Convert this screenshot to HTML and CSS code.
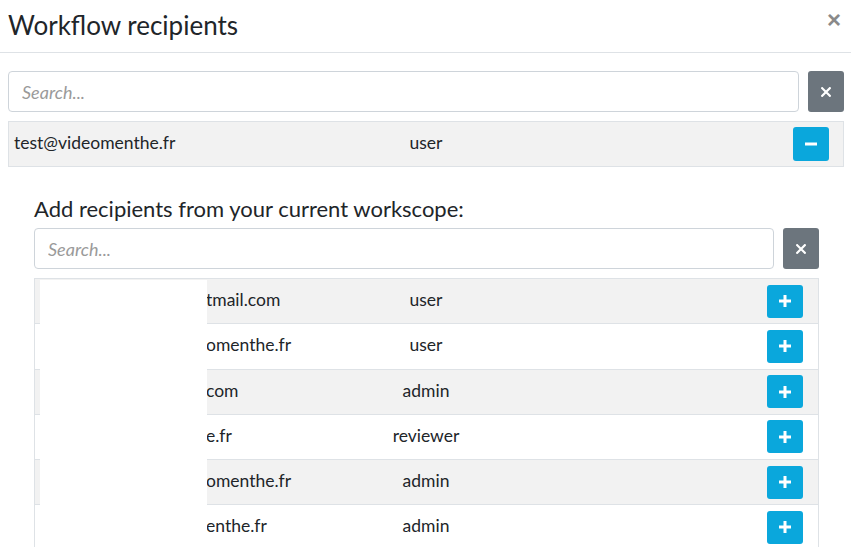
FILE: index.html
```html
<!DOCTYPE html>
<html lang="en">
<head>
<meta charset="utf-8">
<title>Workflow recipients</title>
<link rel="stylesheet" href="styles.css">
</head>
<body>
<div class="modal">
  <header class="modal-header">
    <h1 class="modal-title">Workflow recipients</h1>
    <button class="close" type="button">&times;</button>
  </header>
  <div class="modal-body">
    <div class="search-row">
      <input class="search-input" type="text" placeholder="Search...">
      <button class="btn-clear" type="button"><svg width="10" height="10" viewBox="0 0 10 10"><path d="M1.2 1.2 8.8 8.8M8.8 1.2 1.2 8.8" stroke="#fff" stroke-width="2.2" stroke-linecap="square"/></svg></button>
    </div>
    <div class="selected-list">
      <div class="row row-selected">
        <div class="cell-email">test@videomenthe.fr</div>
        <div class="cell-role">user</div>
        <div class="cell-action">
          <button class="btn-blue" type="button"><svg width="12" height="12" viewBox="0 0 12 12"><rect x="0" y="4.5" width="12" height="3" fill="#fff"/></svg></button>
        </div>
      </div>
    </div>

    <section class="add-section">
      <h2 class="add-title">Add recipients from your current workscope:</h2>
      <div class="search-row">
        <input class="search-input" type="text" placeholder="Search...">
        <button class="btn-clear" type="button"><svg width="10" height="10" viewBox="0 0 10 10"><path d="M1.2 1.2 8.8 8.8M8.8 1.2 1.2 8.8" stroke="#fff" stroke-width="2.2" stroke-linecap="square"/></svg></button>
      </div>
      <div class="list">
        <div class="row row-odd">
          <div class="cell-email cell-email-list"><span class="hidden-part"></span>tmail.com</div>
          <div class="cell-role">user</div>
          <div class="cell-action"><button class="btn-blue btn-plus" type="button"><svg width="12" height="12" viewBox="0 0 12 12"><rect x="0" y="4.5" width="12" height="3" fill="#fff"/><rect x="4.5" y="0" width="3" height="12" fill="#fff"/></svg></button></div>
        </div>
        <div class="row">
          <div class="cell-email cell-email-list"><span class="hidden-part"></span>omenthe.fr</div>
          <div class="cell-role">user</div>
          <div class="cell-action"><button class="btn-blue btn-plus" type="button"><svg width="12" height="12" viewBox="0 0 12 12"><rect x="0" y="4.5" width="12" height="3" fill="#fff"/><rect x="4.5" y="0" width="3" height="12" fill="#fff"/></svg></button></div>
        </div>
        <div class="row row-odd">
          <div class="cell-email cell-email-list"><span class="hidden-part"></span>com</div>
          <div class="cell-role">admin</div>
          <div class="cell-action"><button class="btn-blue btn-plus" type="button"><svg width="12" height="12" viewBox="0 0 12 12"><rect x="0" y="4.5" width="12" height="3" fill="#fff"/><rect x="4.5" y="0" width="3" height="12" fill="#fff"/></svg></button></div>
        </div>
        <div class="row">
          <div class="cell-email cell-email-list"><span class="hidden-part"></span>e.fr</div>
          <div class="cell-role">reviewer</div>
          <div class="cell-action"><button class="btn-blue btn-plus" type="button"><svg width="12" height="12" viewBox="0 0 12 12"><rect x="0" y="4.5" width="12" height="3" fill="#fff"/><rect x="4.5" y="0" width="3" height="12" fill="#fff"/></svg></button></div>
        </div>
        <div class="row row-odd">
          <div class="cell-email cell-email-list"><span class="hidden-part"></span>omenthe.fr</div>
          <div class="cell-role">admin</div>
          <div class="cell-action"><button class="btn-blue btn-plus" type="button"><svg width="12" height="12" viewBox="0 0 12 12"><rect x="0" y="4.5" width="12" height="3" fill="#fff"/><rect x="4.5" y="0" width="3" height="12" fill="#fff"/></svg></button></div>
        </div>
        <div class="row">
          <div class="cell-email cell-email-list"><span class="hidden-part"></span>enthe.fr</div>
          <div class="cell-role">admin</div>
          <div class="cell-action"><button class="btn-blue btn-plus" type="button"><svg width="12" height="12" viewBox="0 0 12 12"><rect x="0" y="4.5" width="12" height="3" fill="#fff"/><rect x="4.5" y="0" width="3" height="12" fill="#fff"/></svg></button></div>
        </div>
        <div class="redaction"></div>
      </div>
    </section>
  </div>
</div>
</body>
</html>
```

FILE: styles.css
```css
* { box-sizing: border-box; }

html, body {
  margin: 0;
  padding: 0;
  background: #fff;
  height: 100%;
  overflow: hidden;
}

body {
  font-family: Lato, "Open Sans", "Liberation Sans", sans-serif;
  color: #212529;
  font-size: 17.5px;
}

.modal-header {
  height: 53px;
  border-bottom: 1px solid #dee2e6;
  display: flex;
  align-items: flex-start;
  justify-content: space-between;
  padding: 0 10px 0 8px;
}

.modal-title {
  margin: 0;
  font-weight: 400;
  font-size: 26px;
  line-height: 32px;
  padding-top: 9px;
  color: #212529;
}

.close {
  border: 0;
  background: transparent;
  color: #8a8a8a;
  font-size: 24px;
  font-weight: 700;
  line-height: 1;
  padding: 8px 0 0;
  font-family: "Liberation Sans", sans-serif;
  cursor: pointer;
}

.modal-body {
  padding: 18px 7px 0 8px;
}

.search-row {
  display: flex;
  gap: 9px;
  align-items: flex-start;
}

.search-input {
  flex: 1;
  height: 41px;
  border: 1px solid #ced4da;
  border-radius: 4px;
  padding: 0 13px;
  font-family: Lato, "Open Sans", sans-serif;
  font-size: 18px;
  color: #495057;
  outline: none;
}

.search-input::placeholder {
  color: #9a9a9a;
  font-style: italic;
}

.btn-clear {
  width: 36px;
  height: 41px;
  border: 0;
  border-radius: 3px;
  background: #6c757d;
  display: flex;
  align-items: center;
  justify-content: center;
  padding: 0;
  cursor: pointer;
}

.selected-list {
  margin-top: 9px;
}

.row {
  display: flex;
  align-items: center;
  height: 45.25px;
  border-top: 1px solid #dee2e6;
  background: #fff;
}

.row-selected {
  height: 46px;
  border: 1px solid #dee2e6;
  background: #f2f2f2;
}

.row-odd {
  background: #f2f2f2;
}

.cell-email {
  width: 357px;
  padding-left: 5px;
  padding-bottom: 3px;
  white-space: nowrap;
  overflow: hidden;
}

.cell-email-list {
  width: 331px;
}

.hidden-part {
  display: inline-block;
  width: 166px;
}

.cell-role {
  width: 120px;
  padding-bottom: 3px;
  text-align: center;
}

.cell-action {
  flex: 1;
  display: flex;
  justify-content: flex-end;
  padding-right: 14px;
}

.list .cell-action {
  padding-right: 15px;
}

.btn-blue {
  width: 36px;
  height: 34px;
  border: 0;
  border-radius: 3px;
  background: #0aa7dc;
  display: flex;
  align-items: center;
  justify-content: center;
  padding: 0;
  cursor: pointer;
}

.btn-plus {
  height: 33px;
}

.add-section {
  margin: 0 25px 0 26px;
}

.add-title {
  margin: 30px 0 7px;
  font-weight: 400;
  font-size: 22px;
  line-height: 24px;
  color: #212529;
}

.list {
  position: relative;
  margin-top: 9px;
  border-left: 1px solid #dee2e6;
  border-right: 1px solid #dee2e6;
}

.redaction {
  position: absolute;
  left: 5px;
  top: 2px;
  width: 167px;
  bottom: -40px;
  background: #fff;
}
```
